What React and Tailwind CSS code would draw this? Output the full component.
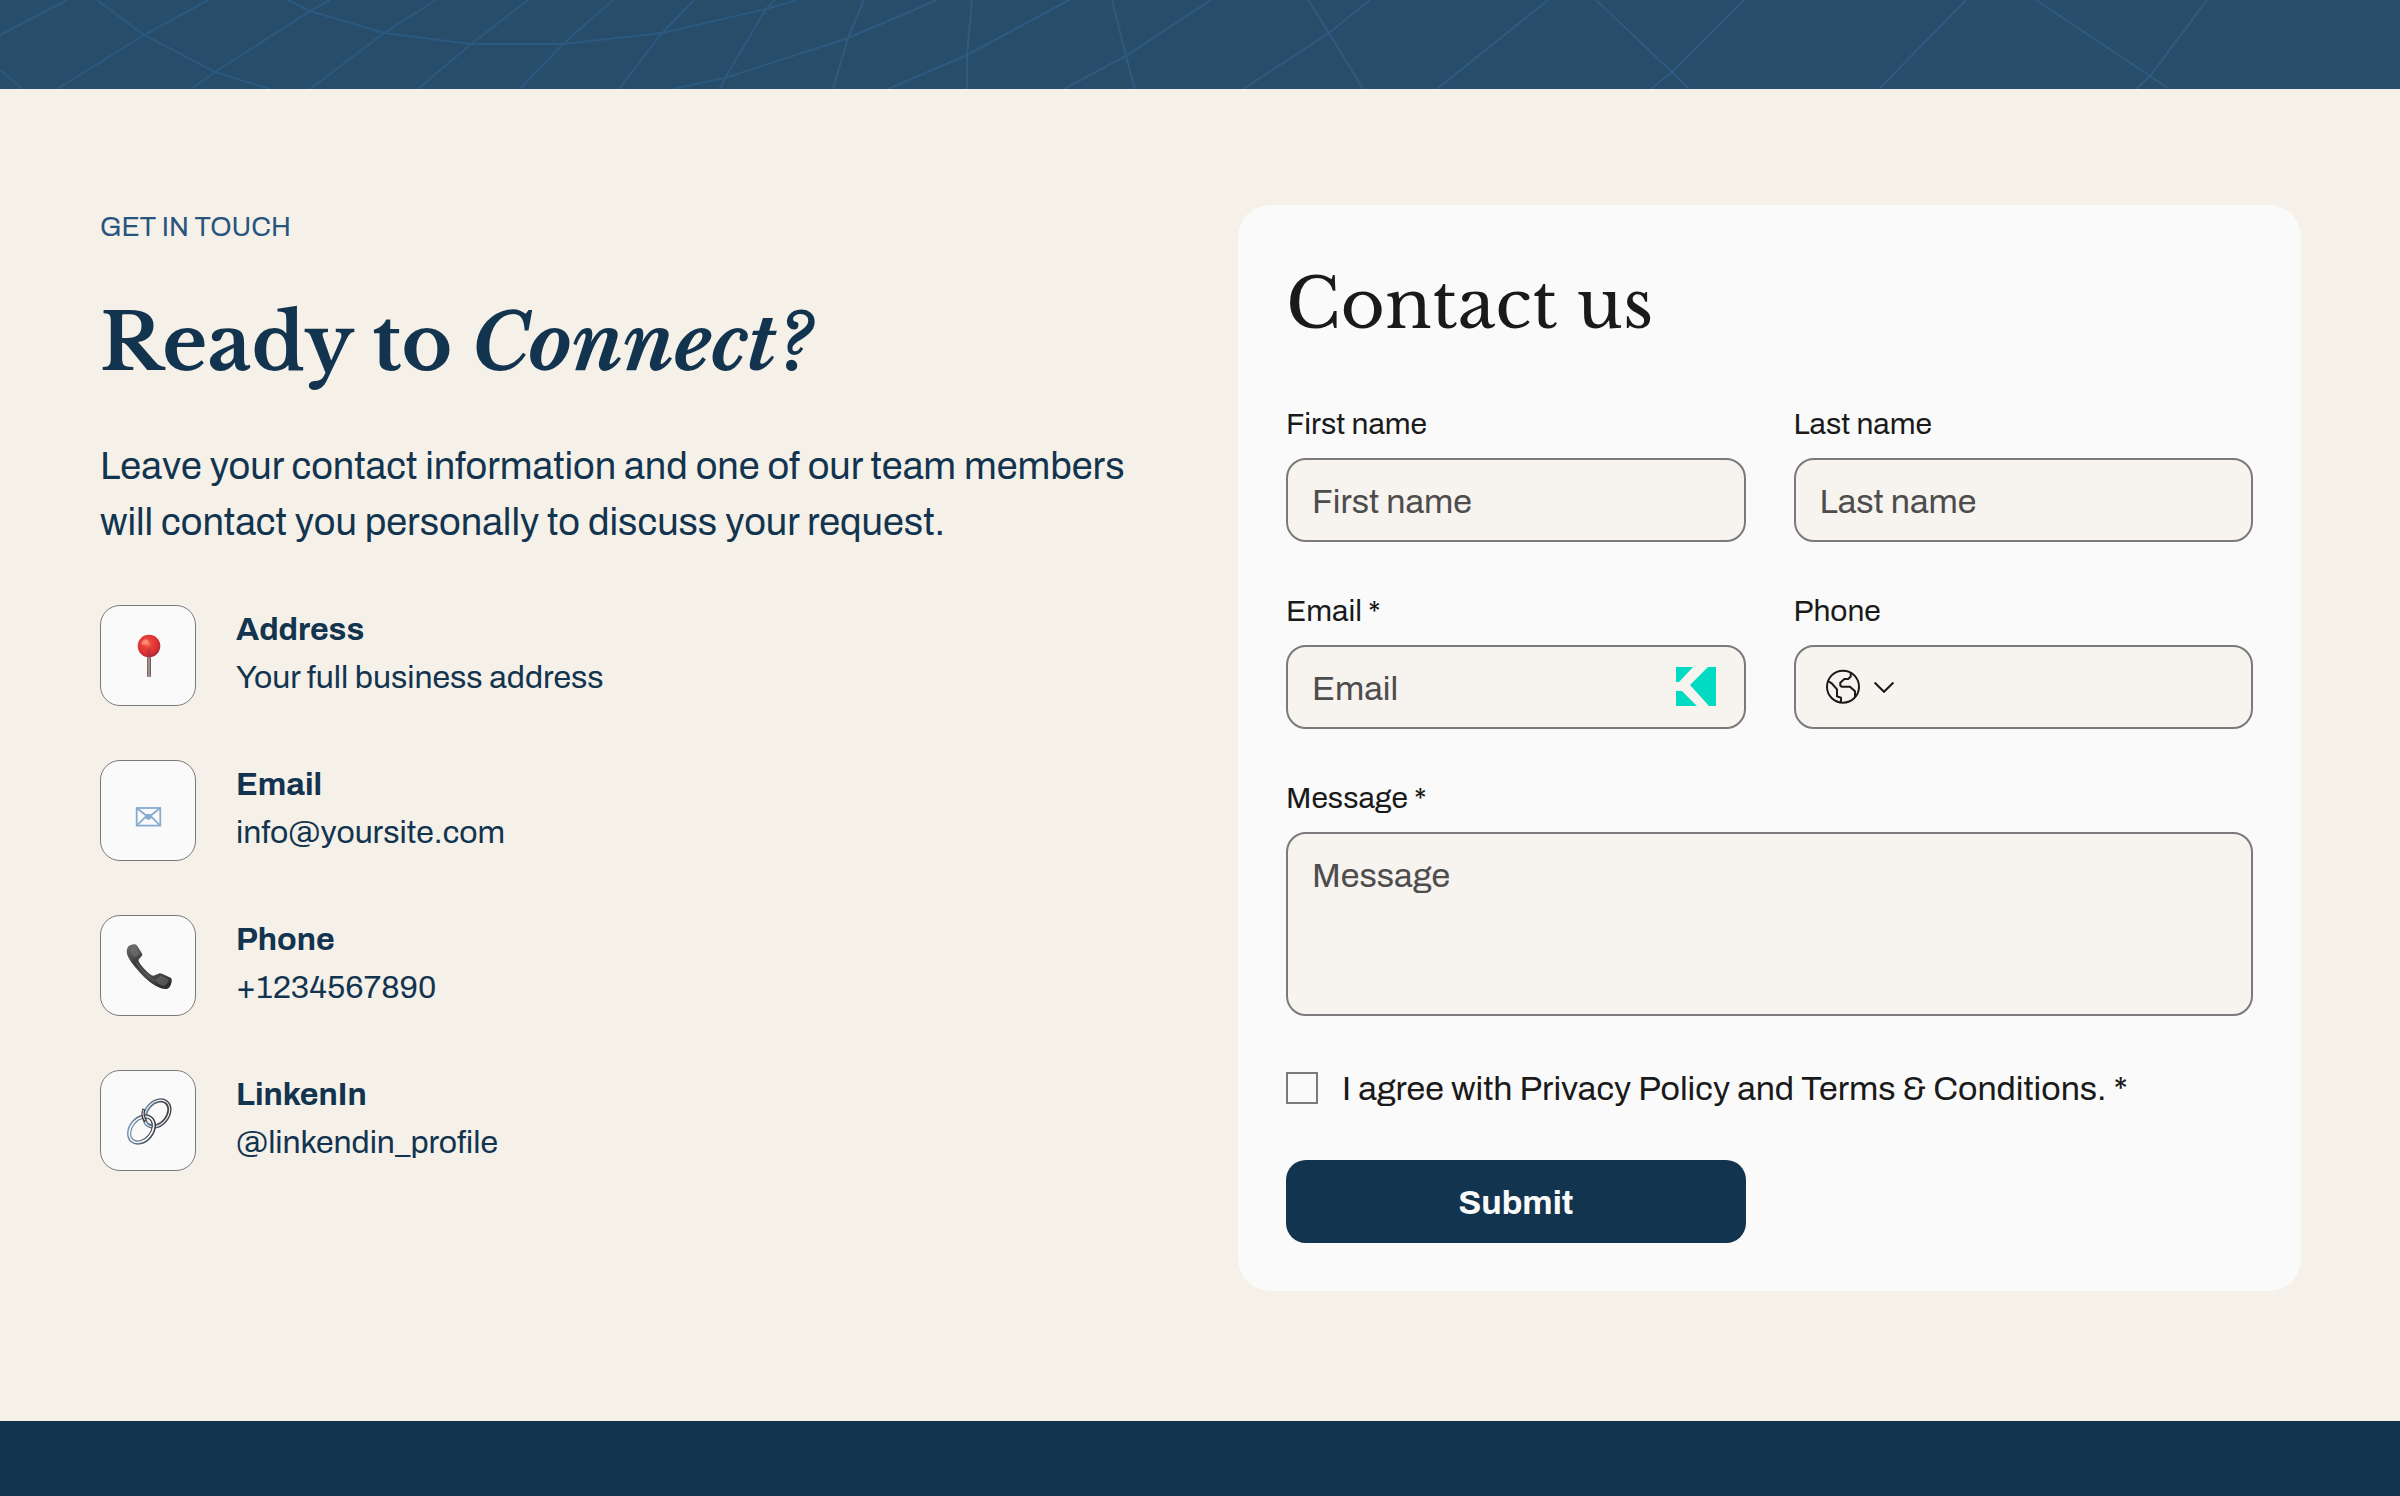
import React from "react";

const SERIF = "font-['Libre_Baskerville','Liberation_Serif',serif]";

function HeroPattern() {
  return (
    <svg viewBox="0 0 2400 89" preserveAspectRatio="none" className="block h-full w-full" fill="none" aria-hidden="true">
      <g stroke="#2b597f" strokeWidth="2">
        <path d="M67 0L0 35M208 0L144 35L57 89M330 0L310 11L215 72L191 89M436 0L384 33L310 89M528 0L471 44L418 89M613 0L563 44L520 89M694 0L662 33L619 89M775 0L766 9L725 78L720 89" />
        <path d="M97 0L144 35L215 72L270 89M0 70L23 89" />
        <path d="M288 0L310 11L384 33L471 44L563 44L662 33L766 9L797 0M672 89L725 78" />
      </g>
      <g stroke="#2f5a80" strokeWidth="2">
        <path d="M725 78L848 38L937 0" />
        <path d="M864 0L848 38L833 89M972 0L967 55L967 89M1112 0L1126 56L1135 89" />
        <path d="M1069 0L967 55L888 89M1211 0L1126 56L1064 89M1370 0L1329 33L1243 89M1548 0L1437 89M1744 0L1672 72L1651 89M1966 0L1879 89M2207 0L2150 76L2136 89" />
        <path d="M1308 0L1329 33L1363 89M1596 0L1672 72L1689 89M2036 0L2150 76L2169 89" />
      </g>
    </svg>
  );
}

function PinIcon() {
  return (
    <svg viewBox="0 0 48 48" className="size-12" aria-hidden="true">
      <defs>
        <radialGradient id="pinHead" cx="0.42" cy="0.38" r="0.62">
          <stop offset="0" stopColor="#ff8a6c" />
          <stop offset="0.3" stopColor="#e8443c" />
          <stop offset="0.75" stopColor="#dc2f33" />
          <stop offset="1" stopColor="#a92a38" />
        </radialGradient>
        <linearGradient id="pinStick">
          <stop offset="0" stopColor="#6b5a55" />
          <stop offset="0.5" stopColor="#b3a39b" />
          <stop offset="1" stopColor="#5d4c48" />
        </linearGradient>
      </defs>
      <rect x="23" y="22" width="4" height="23" rx="1" fill="url(#pinStick)" />
      <circle cx="25" cy="14" r="11.3" fill="url(#pinHead)" />
      <path d="M23.4 17h3.2v7.5h-3.2z" fill="#a8323a" opacity="0.6" />
      <ellipse cx="20.5" cy="10" rx="3.4" ry="2.2" fill="#ffb7a2" opacity="0.55" transform="rotate(-35 20.5 10)" />
    </svg>
  );
}

function EnvelopeIcon() {
  return (
    <svg viewBox="0 0 48 48" className="size-12" fill="none" stroke="#86abd2" strokeWidth="1.8" aria-hidden="true">
      <rect x="12.7" y="21" width="23.6" height="17.6" />
      <path d="M13 21.3L24.5 30.3L36 21.3M13 38.3L22 29.3M36 38.3L27 29.3" />
      <circle cx="24.5" cy="29.8" r="3" fill="#86abd2" stroke="none" />
    </svg>
  );
}

function HandsetIcon() {
  return (
    <svg viewBox="0 0 48 48" className="size-12" aria-hidden="true">
      <defs>
        <linearGradient id="handset" x1="0.2" y1="0" x2="0.6" y2="1">
          <stop offset="0" stopColor="#6a6a6a" />
          <stop offset="0.35" stopColor="#3a3b3b" />
          <stop offset="0.7" stopColor="#4b4c4c" />
          <stop offset="1" stopColor="#2e2f2f" />
        </linearGradient>
      </defs>
      <path
        fill="url(#handset)"
        d="M2.7 10C2.7 6 4 4 6 3.2C9 2 11.8 1.8 13 3.6L18 11.4C18.7 12.6 18.3 13.4 17.4 14.6L14.6 17.6C14 19 15.6 21 17 23C19.6 26.6 24 31 27.6 33.2C28.8 33.9 30 33.7 31.2 33L35 31.4C36 31 37 31.2 38 31.7L46.6 35.8C47.8 36.5 48 38 47.6 40C47 43 45.8 45.6 44 46.5C42 47.4 39.6 47.2 37 46.3C29 43.2 21.6 37 15.6 30.2C9.6 23.4 3 15.6 2.7 10Z"
      />
      <path d="M6 7C8 4.6 10.6 4 12 5.4L15.6 11.4L12 15.4C9 15 6.6 12 6 7Z" fill="#727272" opacity="0.55" />
      <path d="M31 38L36.6 33.6L44.6 37.4C44 41 42 43.6 39 43.8C36 43 33 41 31 38Z" fill="#6c6c6c" opacity="0.6" />
      <path d="M12 20C17 28 24 34.6 31 39" stroke="#7a7b7b" strokeWidth="0.9" fill="none" opacity="0.7" />
    </svg>
  );
}

function ChainIcon() {
  return (
    <svg viewBox="0 0 48 48" className="size-12" fill="none" aria-hidden="true">
      <defs>
        <linearGradient id="ringTop" x1="0" y1="0" x2="1" y2="1">
          <stop offset="0" stopColor="#6f9ccb" />
          <stop offset="0.4" stopColor="#5b6a78" />
          <stop offset="1" stopColor="#3a2526" />
        </linearGradient>
        <linearGradient id="ringLow" x1="0" y1="0" x2="1" y2="1">
          <stop offset="0" stopColor="#7fa4c8" />
          <stop offset="0.5" stopColor="#59636e" />
          <stop offset="1" stopColor="#2c2c30" />
        </linearGradient>
      </defs>
      <g transform="rotate(-50 33 16.5)">
        <ellipse cx="33" cy="16.5" rx="14.6" ry="10.6" stroke="url(#ringTop)" strokeWidth="4.2" />
        <ellipse cx="33" cy="16.5" rx="14.8" ry="10.8" stroke="#e6eef5" strokeWidth="1.2" />
      </g>
      <g transform="rotate(-50 17.5 32.5)">
        <ellipse cx="17.5" cy="32.5" rx="14.6" ry="10.6" stroke="url(#ringLow)" strokeWidth="4.2" />
        <ellipse cx="17.5" cy="32.5" rx="14.4" ry="10.4" stroke="#f3f8fc" strokeWidth="1.6" />
      </g>
      <path d="M20 12C18.6 16 19 21 21.6 24.4" stroke="#4a3a3c" strokeWidth="3.4" />
      <path d="M19.4 13C18.6 16.6 19.2 20.6 21.2 23.4" stroke="#dfe8ef" strokeWidth="1" />
    </svg>
  );
}

const contacts = [
  { title: "Address", value: "Your full business address", Icon: PinIcon },
  { title: "Email", value: "info@yoursite.com", Icon: EnvelopeIcon },
  { title: "Phone", value: "+1234567890", Icon: HandsetIcon },
  { title: "LinkenIn", value: "@linkendin_profile", Icon: ChainIcon },
];

const box = "w-full rounded-[20px] border-2 border-[#7a7a7a] bg-[#f7f3ee] text-[34px] text-[#1a1a1a] placeholder:text-[#4d4d4d] placeholder:opacity-100";

function Label({ id, children }) {
  return (
    <label htmlFor={id} className="mb-3 block text-[30px] leading-[44px]">
      {children}
    </label>
  );
}

function ContactInfo() {
  return (
    <div className="text-[#12344f]">
      <p className="text-[27px] leading-[44px] text-[#27557f]">GET IN TOUCH</p>
      <h1 className={`mt-11 text-[77px] leading-[100px] font-bold ${SERIF}`}>
        Ready to <em>Connect?</em>
      </h1>
      <p className="mt-[46px] text-[38px] leading-[56px]">
        Leave your contact information and one of our team members will contact you personally to discuss your request.
      </p>
      <ul className="mt-[54px] flex flex-col gap-[54px]">
        {contacts.map(({ title, value, Icon }) => (
          <li key={title} className="flex gap-10">
            <span className="flex h-[101px] w-24 shrink-0 items-center justify-center rounded-[20px] border border-[#7a7a7a] bg-[#fafafa]">
              <Icon />
            </span>
            <div className="pt-px text-[32px] leading-[48px]">
              <h2 className="font-bold">{title}</h2>
              <p>{value}</p>
            </div>
          </li>
        ))}
      </ul>
    </div>
  );
}

function ContactForm() {
  return (
    <form className="rounded-[32px] bg-[#fafafa] p-12 text-[#1a1a1a]" onSubmit={(e) => e.preventDefault()}>
      <h2 className={`mb-[47px] text-[68px] leading-[102px] ${SERIF}`}>Contact us</h2>
      <div className="grid grid-cols-2 gap-x-12 gap-y-[47px]">
        <div>
          <Label id="first">First name</Label>
          <input id="first" type="text" placeholder="First name" className={`${box} h-[84px] px-6 pt-0.5`} />
        </div>
        <div>
          <Label id="last">Last name</Label>
          <input id="last" type="text" placeholder="Last name" className={`${box} h-[84px] px-6 pt-0.5`} />
        </div>
        <div>
          <Label id="email">Email *</Label>
          <div className="relative">
            <input id="email" type="email" placeholder="Email" className={`${box} block h-[84px] pt-0.5 pr-20 pl-6`} />
            <svg viewBox="0 0 40 39" className="absolute top-[22px] right-[30px] h-[39px] w-10" fill="#03dac2" aria-hidden="true">
              <path d="M0 0H17L3 15H0ZM14 18L32 0H40V39H33ZM0 24H6L21 39H0Z" />
            </svg>
          </div>
        </div>
        <div>
          <Label id="phone">Phone</Label>
          <div className={`${box} flex h-[84px] items-center overflow-hidden pl-[29px]`}>
            <button type="button" aria-label="Country code" className="flex items-center gap-3">
              <svg viewBox="0 0 36 36" className="size-9" fill="none" stroke="#1a1a1a" strokeWidth="2" aria-hidden="true">
                <circle cx="18" cy="17.7" r="16" />
                <path d="M3 12L6.7 14.3L12 20.3V27.3L16 28.7V34" />
                <path d="M25.7 3.7V7.5L23.3 10H19.3L15.3 13.7V16.5L16.7 17.7H25L30 22.3V28.7" />
              </svg>
              <svg viewBox="0 0 22 14" className="h-[14px] w-[22px]" fill="none" stroke="#1a1a1a" strokeWidth="2" aria-hidden="true">
                <path d="M1.6 2.5L11 11.8L20.4 2.5" />
              </svg>
            </button>
            <input id="phone" type="tel" className="h-full min-w-0 flex-1 bg-transparent px-5 outline-none" />
          </div>
        </div>
        <div className="col-span-2">
          <Label id="message">Message *</Label>
          <textarea id="message" placeholder="Message" className={`${box} block h-[184px] resize-none px-6 py-[18px] leading-[48px]`} />
        </div>
      </div>
      <div className="mt-14 flex items-center gap-6">
        <input id="agree" type="checkbox" className="size-8 shrink-0 appearance-none border-2 border-[#7a7a7a] bg-[#fafafa] checked:bg-[#12344f]" />
        <label htmlFor="agree" className="pt-0.5 text-[34px] leading-[30px]">
          I agree with Privacy Policy and Terms &amp; Conditions. *
        </label>
      </div>
      <div className="mt-14 grid grid-cols-2 gap-x-12">
        <button type="submit" className="h-[83px] rounded-[20px] bg-[#12344f] pt-0.5 text-[34px] font-bold text-[#fafafa]">
          Submit
        </button>
      </div>
    </form>
  );
}

export default function App() {
  return (
    <div className="flex min-h-screen flex-col bg-[#f5f0e8] font-['Archivo','Inter','Liberation_Sans',sans-serif]">
      <header className="h-[89px] bg-[#284d6b]">
        <HeroPattern />
      </header>
      <main className="grid grid-cols-2 gap-x-[75px] pt-[116px] pr-[99px] pb-[130px] pl-[100px]">
        <ContactInfo />
        <ContactForm />
      </main>
      <footer className="min-h-[75px] flex-1 bg-[#12344f]" />
    </div>
  );
}
